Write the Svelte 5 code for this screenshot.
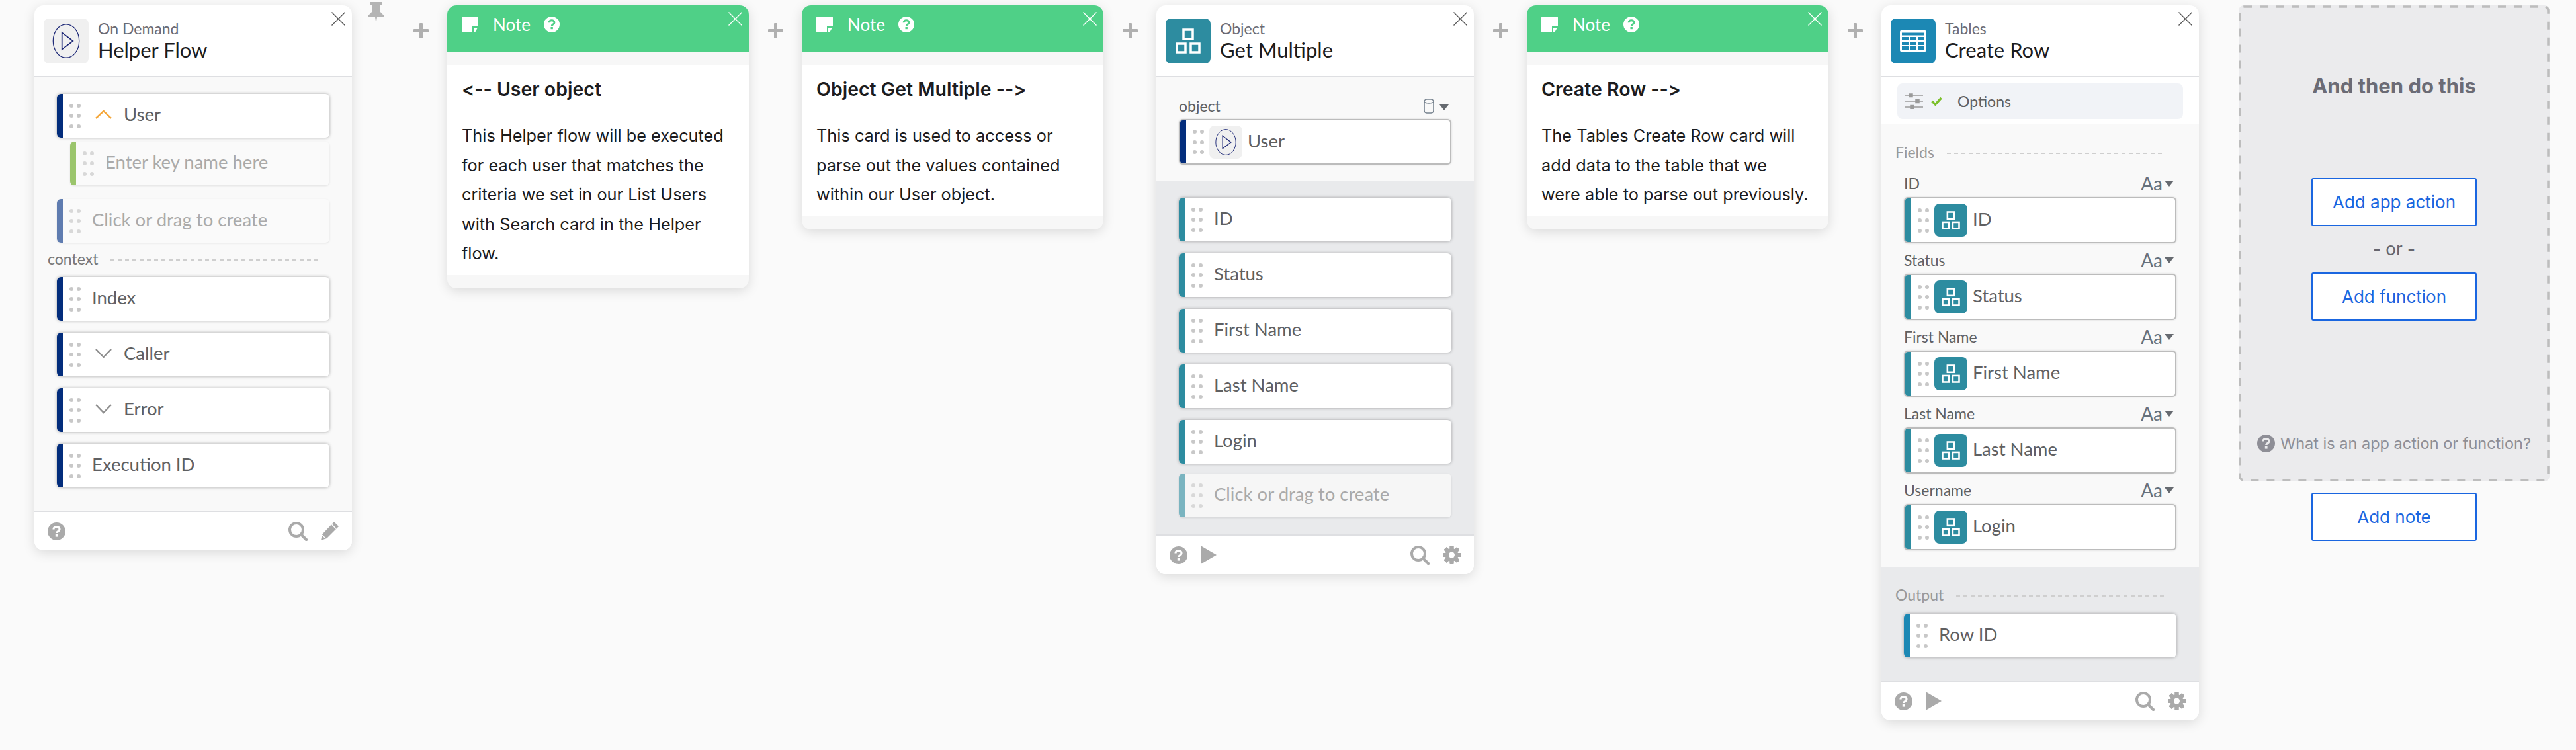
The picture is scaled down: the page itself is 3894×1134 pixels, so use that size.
<script lang="ts">
    // Flow cards, left to right
    const contextRows = [
        { label: 'Index', chevron: false },
        { label: 'Caller', chevron: true },
        { label: 'Error', chevron: true },
        { label: 'Execution ID', chevron: false }
    ];
    const objectRows = ['ID', 'Status', 'First Name', 'Last Name', 'Login'];
    const fields = [
        { name: 'ID', value: 'ID' },
        { name: 'Status', value: 'Status' },
        { name: 'First Name', value: 'First Name' },
        { name: 'Last Name', value: 'Last Name' },
        { name: 'Username', value: 'Login' }
    ];
    // note text keeps the line breaks of the original cards
    const notes = {
        user: {
            title: '<-- User object',
            lines: [
                'This Helper flow will be executed',
                'for each user that matches the',
                'criteria we set in our List Users',
                'with Search card in the Helper',
                'flow.'
            ]
        },
        object: {
            title: 'Object Get Multiple -->',
            lines: [
                'This card is used to access or',
                'parse out the values contained',
                'within our User object.'
            ]
        },
        row: {
            title: 'Create Row -->',
            lines: [
                'The Tables Create Row card will',
                'add data to the table that we',
                'were able to parse out previously.'
            ]
        }
    };
    const gearTeeth = [0, 45, 90, 135, 180, 225, 270, 315];
</script>

{#snippet dots()}
    <span class="dots">
        {#each Array(6) as _}<i></i>{/each}
    </span>
{/snippet}

{#snippet closeIcon()}
    <svg class="close" viewBox="0 0 21 21"><path d="M.5.5l20 20M20.5.5l-20 20" /></svg>
{/snippet}

{#snippet plus()}
    <div class="connector">
        <svg width="23" height="23" viewBox="0 0 23 23"><path d="M9 1a1 1 0 011-1h3a1 1 0 011 1v8h8a1 1 0 011 1v3a1 1 0 01-1 1h-8v8a1 1 0 01-1 1h-3a1 1 0 01-1-1v-8H1a1 1 0 01-1-1v-3a1 1 0 011-1h8z" fill="#b0b0b0" /></svg>
    </div>
{/snippet}

{#snippet help(size, fg, bg)}
    <svg width={size} height={size} viewBox="0 0 27 27">
        <circle cx="13.5" cy="13.5" r="13.5" fill={fg} />
        <path d="M9 10.5c0-2.6 2-4 4.500-4s4.500 1.500 4.500 3.800c0 3.200-4.300 3.200-4.300 5.700" fill="none" stroke={bg} stroke-width="3.200" />
        <rect x="11.800" y="18" width="3.800" height="3.600" fill={bg} />
    </svg>
{/snippet}

{#snippet playCircle(w, h)}
    <svg width={w} height={h} viewBox="0 0 52 66">
        <ellipse cx="26" cy="33" rx="25" ry="32" fill="none" stroke="#1f2a78" stroke-width="1.600" />
        <path d="M18 17v32l21-16z" fill="none" stroke="#1f2a78" stroke-width="2.200" />
    </svg>
{/snippet}

{#snippet blocks(size)}
    <svg width={size} height={size} viewBox="0 0 68 68" fill="none" stroke="#fff" stroke-width="3.500">
        <rect x="27" y="17" width="14" height="14" />
        <rect x="17" y="38" width="13" height="13" />
        <rect x="38" y="38" width="13" height="13" />
    </svg>
{/snippet}

{#snippet search()}
    <svg width="29" height="29" viewBox="0 0 29 29" fill="none" stroke="#aaa">
        <circle cx="12" cy="12" r="10" stroke-width="4" />
        <path d="M19 19l8 8" stroke-width="4.500" stroke-linecap="round" />
    </svg>
{/snippet}

{#snippet gear()}
    <svg width="27" height="28" viewBox="0 0 27 28">
        {#each gearTeeth as angle}
            <rect x="10.500" y="0" width="6" height="28" rx="1" fill="#aaa" transform="rotate({angle} 13.5 14)" />
        {/each}
        <circle cx="13.5" cy="14" r="10" fill="#aaa" />
        <circle cx="13.5" cy="14" r="4.500" fill="#fff" />
    </svg>
{/snippet}

{#snippet playTriangle()}
    <svg width="24" height="28" viewBox="0 0 24 28"><path d="M0 0l24 14L0 28z" fill="#aaa" /></svg>
{/snippet}

{#snippet caret()}
    <svg width="14" height="9" viewBox="0 0 14 9"><path d="M0 0h14L7 9z" fill="#666a70" /></svg>
{/snippet}

{#snippet note(data)}
    <section class="card note">
        {@render closeIcon()}
        <header class="note-head">
            <svg width="25" height="24" viewBox="0 0 25 24">
                <path d="M1.500 0h22a1.500 1.500 0 011.500 1.500V15h-9v9H1.500A1.500 1.500 0 010 22.500v-21A1.500 1.500 0 011.500 0z" fill="#fff" />
                <path d="M18 17h6l-4 7h-2z" fill="#fff" />
            </svg>
            <span class="note-word">Note</span>
            {@render help(24, '#fff', '#4fd087')}
        </header>
        <div class="note-text">
            <h3>{data.title}</h3>
            {#each data.lines as line}
                <p>{line}</p>
            {/each}
        </div>
    </section>
{/snippet}

<div class="board">
    <!-- Trigger -->
    <section class="card">
        {@render closeIcon()}
        <header class="head">
            <span class="app-icon app-trigger">{@render playCircle(52, 52)}</span>
            <div>
                <div class="kind">On Demand</div>
                <div class="title">Helper Flow</div>
            </div>
        </header>
        <div class="body helper">
            <div class="row">
                <span class="bar navy"></span>
                {@render dots()}
                <svg class="chevron" width="25" height="13" viewBox="0 0 25 13"><path d="M1 12L12.500 1 24 12" fill="none" stroke="#f5a73b" stroke-width="2.500" /></svg>
                <span class="name after-chevron">User</span>
            </div>
            <div class="row ghost child">
                <span class="bar green"></span>
                {@render dots()}
                <span class="name">Enter key name here</span>
            </div>
            <div class="row ghost create">
                <span class="bar navy-light"></span>
                {@render dots()}
                <span class="name">Click or drag to create</span>
            </div>
            <div class="divider context"><span>context</span><i></i></div>
            <div class="stack">
                {#each contextRows as item}
                    <div class="row">
                        <span class="bar navy"></span>
                        {@render dots()}
                        {#if item.chevron}
                            <svg class="chevron" width="25" height="15" viewBox="0 0 25 15"><path d="M1 1l11.500 12L24 1" fill="none" stroke="#8f8f8f" stroke-width="2.500" /></svg>
                            <span class="name after-chevron">{item.label}</span>
                        {:else}
                            <span class="name">{item.label}</span>
                        {/if}
                    </div>
                {/each}
            </div>
        </div>
        <footer class="foot">
            {@render help(27, '#aaa', '#fff')}
            <span class="spacer"></span>
            {@render search()}
            <svg width="27" height="28" viewBox="0 0 27 28">
                <path d="M20 0l7 7L9 25l-9 3 2-9z" fill="#aaa" />
                <path d="M16.500 4l6.500 6.500" stroke="#fff" stroke-width="1.500" />
                <path d="M2 20l5 5" stroke="#fff" stroke-width="1.200" />
            </svg>
        </footer>
    </section>

    <div class="pin-gap">
        <svg width="23" height="32" viewBox="0 0 23 32" fill="#b4b4b4">
            <path d="M3 0h17v4h-2v11l5 5v3H13l-1.500 9L10 23H0v-3l5-5V4H3z" />
        </svg>
    </div>
    {@render plus()}

    {@render note(notes.user)}
    {@render plus()}
    {@render note(notes.object)}
    {@render plus()}

    <!-- Object get multiple -->
    <section class="card">
        {@render closeIcon()}
        <header class="head">
            <span class="app-icon app-object">{@render blocks(68)}</span>
            <div>
                <div class="kind">Object</div>
                <div class="title">Get Multiple</div>
            </div>
        </header>
        <div class="body object-input">
            <div class="input-label">
                <span>object</span>
                <svg width="16" height="23" viewBox="0 0 16 23" fill="none" stroke="#76828e" stroke-width="1.600">
                    <rect x="1" y="1" width="14" height="21" rx="4" />
                    <path d="M1 5c2 2.500 12 2.500 14 0" />
                </svg>
                {@render caret()}
            </div>
            <div class="row mapped">
                <span class="bar navy"></span>
                {@render dots()}
                <span class="chip app-trigger">{@render playCircle(38, 40)}</span>
                <span class="name">User</span>
            </div>
        </div>
        <div class="body shaded object-rows">
            <div class="stack">
                {#each objectRows as item}
                    <div class="row">
                        <span class="bar teal"></span>
                        {@render dots()}
                        <span class="name">{item}</span>
                    </div>
                {/each}
            </div>
            <div class="row ghost on-shade">
                <span class="bar teal-light"></span>
                {@render dots()}
                <span class="name">Click or drag to create</span>
            </div>
        </div>
        <footer class="foot">
            {@render help(27, '#aaa', '#fff')}
            {@render playTriangle()}
            <span class="spacer"></span>
            {@render search()}
            {@render gear()}
        </footer>
    </section>

    {@render plus()}
    {@render note(notes.row)}
    {@render plus()}

    <!-- Tables create row -->
    <section class="card">
        {@render closeIcon()}
        <header class="head">
            <span class="app-icon app-tables">
                <svg width="40" height="32" viewBox="0 0 40 32">
                    <rect width="40" height="32" rx="2" fill="#fff" />
                    <rect x="3" y="3.500" width="34" height="4" fill="#1c88b4" />
                    {#each [10, 17, 24] as y}
                        {#each [3, 15, 27] as x}
                            <rect {x} {y} width="10" height="5" fill="#1c88b4" />
                        {/each}
                    {/each}
                </svg>
            </span>
            <div>
                <div class="kind">Tables</div>
                <div class="title">Create Row</div>
            </div>
        </header>
        <div class="options-wrap">
            <div class="options">
                <svg width="27" height="24" viewBox="0 0 27 24" fill="none" stroke="#9a9a9a" stroke-width="1.500">
                    <path d="M0 3h27M0 12h27M0 21h27" />
                    <rect x="6" y="1" width="5" height="4.500" fill="#9a9a9a" />
                    <rect x="16" y="9.500" width="5" height="5" fill="#9a9a9a" />
                    <rect x="8" y="18.500" width="5" height="5" fill="#9a9a9a" />
                </svg>
                <svg width="17" height="14" viewBox="0 0 17 14"><path d="M1.500 7l5 5L15.500 2" fill="none" stroke="#7cc02c" stroke-width="3.500" /></svg>
                <span>Options</span>
            </div>
        </div>
        <div class="body fields">
            <div class="divider section"><span>Fields</span><i></i></div>
            <div class="field-list">
                {#each fields as field}
                    <div class="field">
                        <div class="field-label">
                            <span>{field.name}</span>
                            <span class="case">Aa</span>
                            {@render caret()}
                        </div>
                        <div class="row mapped tall">
                            <span class="bar teal"></span>
                            {@render dots()}
                            <span class="chip app-object">{@render blocks(50)}</span>
                            <span class="name">{field.value}</span>
                        </div>
                    </div>
                {/each}
            </div>
        </div>
        <div class="body shaded output">
            <div class="divider section"><span>Output</span><i></i></div>
            <div class="row">
                <span class="bar blue"></span>
                {@render dots()}
                <span class="name">Row ID</span>
            </div>
        </div>
        <footer class="foot">
            {@render help(27, '#aaa', '#fff')}
            {@render playTriangle()}
            <span class="spacer"></span>
            {@render search()}
            {@render gear()}
        </footer>
    </section>

    <!-- Next step -->
    <div class="next">
        <div class="panel">
            <svg class="panel-edge" width="470" height="720" viewBox="0 0 470 720">
                <rect x="2" y="2" width="466" height="716" rx="6" fill="none" stroke="#bdbdbd" stroke-width="3.500" stroke-dasharray="12 12" />
            </svg>
            <h2>And then do this</h2>
            <button class="btn">Add app action</button>
            <div class="or">- or -</div>
            <button class="btn">Add function</button>
            <div class="what">
                {@render help(27, '#8e8e96', '#ebebed')}
                <span>What is an app action or function?</span>
            </div>
        </div>
        <button class="btn">Add note</button>
    </div>
</div>

<style>
    :global(body) {
        background: #fafafa;
    }

    * {
        box-sizing: border-box;
    }

    .board {
        display: flex;
        align-items: flex-start;
        width: 3894px;
        height: 1134px;
        padding: 3px 0 0 52px;
        overflow: hidden;
        font-family: Lato, 'Open Sans', sans-serif;
        color: #5f6062;
    }

    .card {
        position: relative;
        flex: none;
        width: 480px;
        margin-top: 5px;
        border-radius: 14px;
        background: #fff;
        box-shadow: 0 4px 18px rgba(0, 0, 0, 0.13);
        overflow: hidden;
    }

    .close {
        position: absolute;
        top: 10px;
        right: 10px;
        width: 21px;
        height: 21px;
        fill: none;
        stroke: #555;
        stroke-width: 1.4;
    }

    .note .close {
        stroke: #fff;
    }

    .pin-gap {
        flex: none;
        width: 64px;
        padding-left: 25px;
    }

    .connector {
        flex: none;
        display: flex;
        justify-content: center;
        width: 80px;
        padding-top: 32px;
    }

    /* card header */
    .head {
        display: flex;
        gap: 14px;
        height: 109px;
        padding: 20px 14px;
        border-bottom: 2px solid #dedfe2;
    }

    .app-icon {
        display: flex;
        flex: none;
        align-items: center;
        justify-content: center;
        width: 68px;
        height: 68px;
        border-radius: 8px;
    }

    .app-trigger {
        background: #f0f0f0;
    }

    .app-object {
        background: #2d8ca0;
    }

    .app-tables {
        background: #1c88b4;
    }

    .kind {
        height: 30px;
        font-size: 23px;
        line-height: 30px;
        color: #6b6b75;
    }

    .title {
        height: 34px;
        font-size: 31px;
        line-height: 34px;
        color: #1c1c1e;
    }

    /* sections */
    .body {
        background: #f9f9f9;
    }

    .body.shaded {
        background: #e9eaec;
    }

    .helper {
        padding: 25px 34px 35px;
    }

    .stack {
        display: flex;
        flex-direction: column;
        gap: 18px;
    }

    .object-input {
        padding: 31px 34px 25px;
    }

    .input-label {
        display: flex;
        align-items: center;
        height: 24px;
        margin-bottom: 8px;
        font-size: 23px;
        line-height: 24px;
    }

    .input-label span {
        margin-right: auto;
    }

    .input-label svg:last-child {
        margin: 4px 4px 0 8px;
    }

    .object-rows {
        padding: 25px 34px 26px;
    }

    /* rows */
    .row {
        display: flex;
        align-items: center;
        height: 66px;
        border-radius: 6px;
        background: #fff;
        box-shadow: 0 0 5px rgba(0, 0, 0, 0.32);
        overflow: hidden;
    }

    .row.ghost {
        background: #fafafa;
        box-shadow: 0 1px 3px rgba(0, 0, 0, 0.1);
    }

    .row.ghost .name {
        color: #aaa;
    }

    .row.ghost .dots i {
        background: #d8d8d8;
    }

    .child {
        margin: 6px 0 0 20px;
    }

    .create {
        margin-top: 21px;
    }

    .on-shade {
        margin-top: 15px;
    }

    .row.on-shade {
        background: #f6f6f6;
    }

    .mapped {
        height: 69px;
        border: 2px solid #bcbcbc;
        box-shadow: 0 0 3px rgba(0, 0, 0, 0.15);
    }

    .tall {
        height: 70px;
    }

    .bar {
        flex: none;
        align-self: stretch;
        width: 9px;
    }

    .navy {
        background: #032d7c;
    }

    .navy-light {
        background: #5f7cb0;
    }

    .green {
        background: #9bc56c;
    }

    .teal {
        background: #2d8ca0;
    }

    .teal-light {
        background: #7ab4c0;
    }

    .blue {
        background: #1c88b4;
    }

    .dots {
        display: grid;
        flex: none;
        grid-template-columns: 6px 6px;
        column-gap: 5px;
        row-gap: 9.5px;
        margin-left: 10px;
    }

    .dots i {
        width: 6px;
        height: 6px;
        border-radius: 50%;
        background: #c8c8c8;
    }

    .name {
        margin-left: 17px;
        font-size: 27.5px;
        line-height: 30px;
        margin-top: -4px;
        white-space: nowrap;
    }

    .chevron {
        flex: none;
        margin-left: 22px;
        margin-top: -4px;
    }

    .name.after-chevron {
        margin-left: 18px;
    }

    .chip {
        display: flex;
        flex: none;
        align-items: center;
        justify-content: center;
        width: 50px;
        height: 50px;
        margin-left: 8px;
        border-radius: 8px;
    }

    .chip + .name {
        margin-left: 8px;
    }

    /* dashed dividers */
    .divider {
        display: flex;
        align-items: center;
        height: 24px;
        font-size: 23px;
        line-height: 24px;
    }

    .divider i {
        flex: 1;
        height: 2px;
        margin: 4px 0 0 19px;
        background: repeating-linear-gradient(90deg, #cfcfcf 0 6px, transparent 6px 11px);
    }

    .context {
        height: 52px;
        margin: 0 16px 0 -14px;
        padding-bottom: 5px;
        color: #777;
    }

    .section {
        color: #999;
        margin-left: -13px;
        margin-right: 17px;
    }

    /* tables card */
    .options-wrap {
        padding: 9px 24px 8px;
    }

    .options {
        display: flex;
        align-items: center;
        height: 54px;
        padding-left: 12px;
        border-radius: 8px;
        background: #f1f3f7;
        font-size: 23px;
    }

    .options svg:nth-child(2) {
        margin-left: 12px;
    }

    .options span {
        margin-left: 23px;
    }

    .fields {
        padding: 30px 34px 25px;
    }

    .field-list {
        padding-top: 10px;
    }

    .field {
        padding-top: 4px;
    }

    .field-label {
        display: flex;
        align-items: center;
        height: 42px;
        font-size: 23px;
        padding-right: 4px;
    }

    .field-label span:first-child {
        margin-right: auto;
    }

    .case {
        margin-right: 3px;
        font-size: 28px;
        color: #66717d;
    }

    .output {
        padding: 30px 34px 35px;
    }

    .output .row {
        margin-top: 17px;
    }

    .foot {
        display: flex;
        align-items: center;
        gap: 20px;
        height: 60px;
        padding: 0 20px;
        background: #fff;
        border-top: 2px solid #dedfe2;
    }

    .spacer {
        flex: 1;
    }

    /* notes */
    .note {
        width: 456px;
        background: #f7f7f7;
        padding-bottom: 20px;
    }

    .note-head {
        display: flex;
        align-items: center;
        height: 70px;
        margin-bottom: 20px;
        padding: 0 22px 12px;
        background: #4fd087;
        color: #fff;
    }

    .note-word {
        margin: 0 20px 0 22px;
        font-size: 26px;
    }

    .note-text {
        padding: 15px 0 10px 22px;
        background: #fff;
        font-family: Inter, sans-serif;
        font-feature-settings: 'calt' 0, 'liga' 0;
        color: #1c1c1e;
    }

    .note-text h3 {
        margin: 0 0 26px;
        font-size: 28.5px;
        font-weight: 600;
        line-height: 44px;
    }

    .note-text p {
        margin: 0;
        font-size: 25.3px;
        line-height: 44.5px;
        white-space: nowrap;
    }

    /* next step column */
    .next {
        display: flex;
        flex: none;
        flex-direction: column;
        align-items: center;
        gap: 17px;
        width: 470px;
        margin: 5px 0 0 60px;
        font-family: Inter, sans-serif;
    }

    .panel {
        position: relative;
        display: flex;
        flex-direction: column;
        align-items: center;
        width: 470px;
        height: 720px;
        padding-top: 105px;
        background: #ebebed;
        border-radius: 8px;
    }

    .panel-edge {
        position: absolute;
        top: 0;
        left: 0;
    }

    .panel h2 {
        margin: 0 0 122px;
        font-size: 31px;
        font-weight: 700;
        line-height: 34px;
        color: #6b6b75;
    }

    .btn {
        width: 250px;
        height: 73px;
        border: 2px solid #1a66e0;
        border-radius: 3px;
        background: #fff;
        font: 400 26px Inter, sans-serif;
        color: #1a66e0;
    }

    .or {
        height: 70px;
        font-size: 26px;
        line-height: 70px;
        color: #66666c;
    }

    .what {
        display: flex;
        align-items: center;
        gap: 8px;
        margin-top: auto;
        margin-bottom: 43px;
        font-size: 23.5px;
        white-space: nowrap;
        color: #8e8e96;
    }
</style>
